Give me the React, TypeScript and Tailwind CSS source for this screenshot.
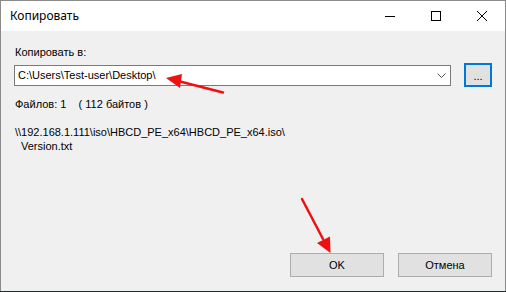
import React from 'react';

const sans = { fontFamily: '"Liberation Sans", Arial, sans-serif' };

const TitleBar: React.FC = () => (
    <div className="flex h-[30px] items-center bg-white">
        <span className="ml-[9px] text-[12px] text-black" style={{ fontFamily: '"Noto Sans", "Open Sans", sans-serif' }}>
            Копировать
        </span>
        <div className="ml-auto flex h-full">
            <div className="flex w-[46px] items-center justify-center">
                <svg width="10" height="10" viewBox="0 0 10 10"><path d="M0 5.5h10" stroke="#000" strokeWidth="1" /></svg>
            </div>
            <div className="flex w-[46px] items-center justify-center">
                <svg width="10" height="10" viewBox="0 0 10 10"><rect x="0.5" y="0.5" width="9" height="9" fill="none" stroke="#000" strokeWidth="1" /></svg>
            </div>
            <div className="flex w-[46px] items-center justify-center">
                <svg width="10" height="10" viewBox="0 0 10 10"><path d="M0 0L10 10M10 0L0 10" stroke="#000" strokeWidth="1" /></svg>
            </div>
        </div>
    </div>
);

const Button: React.FC<{ label: string }> = ({ label }) => (
    <button className="flex h-[24px] w-[94px] items-center justify-center border border-[#adadad] bg-[#e1e1e1] text-[11px] text-black">
        {label}
    </button>
);

const App: React.FC = () => {
    return (
        <div className="relative h-[292px] w-[506px] overflow-hidden bg-[#1d2b3a]" style={sans}>
            <div className="flex h-[291px] w-[506px] flex-col border border-[#8a8a8a] border-b-0 bg-[#f0f0f0]">
                <TitleBar />

                <div className="flex flex-1 flex-col px-[13px] text-[11px] leading-[13px] text-black">
                    <div className="mt-[15px] ml-[1px]">Копировать в:</div>

                    <div className="mt-[4px] flex items-center">
                        <div className="flex h-[21px] w-[438px] items-center border border-[#7a7a7a] bg-white pl-[3px]">
                            <span>C:\Users\Test-user\Desktop\</span>
                            <svg className="ml-auto mr-[4px]" width="9" height="5" viewBox="0 0 9 5">
                                <path d="M0.5 0.5L4.5 4.5L8.5 0.5" fill="none" stroke="#555" strokeWidth="1" />
                            </svg>
                        </div>
                        <button className="ml-[13px] flex h-[24px] w-[28px] items-end justify-center border-2 border-[#0078d7] bg-[#e1e1e1] pb-[5px] text-[11px] leading-[8px]">
                            ...
                        </button>
                    </div>

                    <div className="mt-[11px] ml-[1px] whitespace-pre">Файлов: 1    ( 112 байтов )</div>

                    <div className="mt-[14px] ml-[1px] leading-[14px]">
                        <div>\\192.168.1.111\iso\HBCD_PE_x64\HBCD_PE_x64.iso\</div>
                        <div className="ml-[6px]">Version.txt</div>
                    </div>

                    <div className="mt-auto mb-[14px] flex justify-end gap-[14px]">
                        <Button label="OK" />
                        <Button label="Отмена" />
                    </div>
                </div>
            </div>

            <svg className="pointer-events-none absolute left-0 top-0" width="506" height="292" viewBox="0 0 506 292">
                <path d="M223 92.5L178 81" stroke="#f01010" strokeWidth="2.5" strokeLinecap="round" />
                <path d="M166 78L182 74L180 88Z" fill="#f01010" />
                <path d="M302 199L323 239" stroke="#f01010" strokeWidth="2.5" strokeLinecap="round" />
                <path d="M330.5 253L317 243L330 236.5Z" fill="#f01010" />
            </svg>
        </div>
    );
};

export default App;
